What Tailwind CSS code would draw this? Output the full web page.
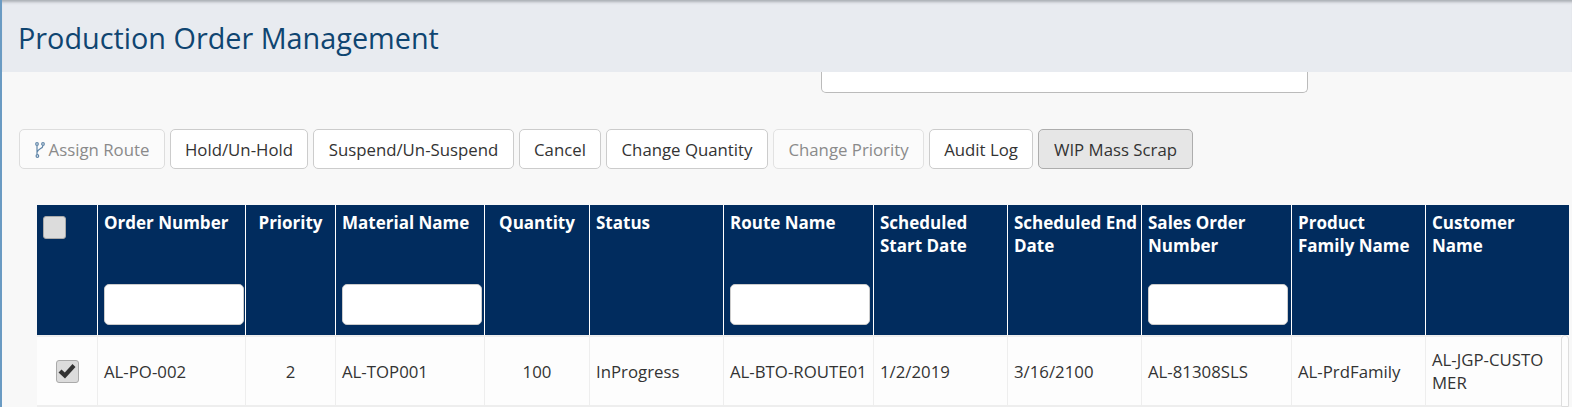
<!DOCTYPE html>
<html lang="en">
<head>
<meta charset="UTF-8">
<title>Production Order Management</title>
<script src="https://cdn.jsdelivr.net/npm/@tailwindcss/browser@4"></script>
</head>
<body class="m-0 h-[407px] w-[1572px] overflow-hidden bg-[#f8f8f8] font-['Open_Sans',sans-serif] text-[16.8px] text-[#333]">
<div class="h-[407px] border-l-[2px] border-[#6a9bc3]">
  <header class="h-[72px] bg-[#e8ebf0] pt-[18px] pl-[16px] shadow-[inset_0_4px_3px_-2px_#a9adb3]">
    <h1 class="text-[28.8px] leading-[40px] text-[#0f4571]">Production Order Management</h1>
  </header>

  <div class="ml-[819px] h-[21px] w-[487px] rounded-b-[5px] border border-t-0 border-[#bbb] bg-white"></div>

  <div class="mt-[36px] ml-[17px] flex h-[40px] gap-[5px]">
    <button class="flex w-[146px] items-center justify-center rounded-[5px] border border-[#ddd] bg-[#fbfbfb] pt-[2px] text-[#8a8a8a]">
      <svg class="mr-[4px] h-[16px] w-[10px]" viewBox="0 0 10 16" fill="none" stroke="#5f85a8" stroke-width="1.2">
        <circle cx="2" cy="2" r="1.3"/>
        <circle cx="8" cy="2" r="1.3"/>
        <circle cx="2.4" cy="14" r="1.3"/>
        <path d="M2 3.4V12.6M8 3.4C8 7 3 6.5 2.2 10"/>
      </svg>
      Assign Route
    </button>
    <button class="w-[138px] rounded-[5px] border border-[#ccc] bg-white pt-[2px] text-[#333]">Hold/Un-Hold</button>
    <button class="w-[201px] rounded-[5px] border border-[#ccc] bg-white pt-[2px] text-[#333]">Suspend/Un-Suspend</button>
    <button class="w-[82px] rounded-[5px] border border-[#ccc] bg-white pt-[2px] text-[#333]">Cancel</button>
    <button class="w-[162px] rounded-[5px] border border-[#ccc] bg-white pt-[2px] text-[#333]">Change Quantity</button>
    <button class="w-[151px] rounded-[5px] border border-[#e2e2e2] bg-[#fbfbfb] pt-[2px] text-[#8a8a8a]">Change Priority</button>
    <button class="w-[104px] rounded-[5px] border border-[#ccc] bg-white pt-[2px] text-[#333]">Audit Log</button>
    <button class="w-[155px] rounded-[5px] border border-[#adadad] bg-[#e6e6e6] pt-[2px] text-[#333]">WIP Mass Scrap</button>
  </div>

  <table class="mt-[36px] ml-[35px] w-[1532px] table-fixed border-separate border-spacing-0">
    <colgroup>
      <col class="w-[61px]"><col class="w-[148px]"><col class="w-[90px]"><col class="w-[149px]">
      <col class="w-[105px]"><col class="w-[134px]"><col class="w-[150px]"><col class="w-[134px]">
      <col class="w-[134px]"><col class="w-[150px]"><col class="w-[134px]"><col class="w-[135px]"><col class="w-[8px]">
    </colgroup>
    <thead class="bg-[#012c5e] text-left align-top text-[17px] leading-[23px] font-bold text-white">
      <tr class="h-[130px]">
        <th class="border-r border-white pt-[11px] pl-[6px]">
          <div class="h-[23px] w-[23px] rounded-[3px] border border-[#aaa] bg-[#dcdcdc]"></div>
        </th>
        <th class="border-r border-white pt-[6px] pl-[6px]">
          <div class="h-[73px]">Order Number</div>
          <input class="block h-[41px] w-[140px] rounded-[5px] border border-[#ccc] bg-white">
        </th>
        <th class="border-r border-white pt-[6px] text-center">Priority</th>
        <th class="border-r border-white pt-[6px] pl-[6px]">
          <div class="h-[73px]">Material Name</div>
          <input class="block h-[41px] w-[140px] rounded-[5px] border border-[#ccc] bg-white">
        </th>
        <th class="border-r border-white pt-[6px] text-center">Quantity</th>
        <th class="border-r border-white pt-[6px] pl-[6px]">Status</th>
        <th class="border-r border-white pt-[6px] pl-[6px]">
          <div class="h-[73px]">Route Name</div>
          <input class="block h-[41px] w-[140px] rounded-[5px] border border-[#ccc] bg-white">
        </th>
        <th class="border-r border-white pt-[6px] pl-[6px]">Scheduled Start Date</th>
        <th class="border-r border-white pt-[6px] pl-[6px]">Scheduled End Date</th>
        <th class="border-r border-white pt-[6px] pl-[6px]">
          <div class="h-[73px]">Sales Order Number</div>
          <input class="block h-[41px] w-[140px] rounded-[5px] border border-[#ccc] bg-white">
        </th>
        <th class="border-r border-white pt-[6px] pl-[6px]">Product Family Name</th>
        <th colspan="2" class="pt-[6px] pr-[30px] pl-[6px]">Customer Name</th>
      </tr>
    </thead>
    <tbody class="bg-[#fdfdfd] text-[16.8px] leading-[23px] text-[#333]">
      <tr class="h-[72px]">
        <td class="border-t-2 border-r border-b-2 border-[#eee]">
          <div class="mx-auto flex h-[23px] w-[23px] items-center justify-center rounded-[3px] border border-[#aaa] bg-[#dcdcdc]">
            <svg class="h-[17px] w-[18px]" viewBox="0 0 18 17" fill="#333"><path d="M14.5 1 17.5 4 7 15.5 0.5 9.5 3.5 6.5 6.8 9.5Z"/></svg>
          </div>
        </td>
        <td class="border-t-2 border-r border-b-2 border-[#eee] pl-[6px]">AL-PO-002</td>
        <td class="border-t-2 border-r border-b-2 border-[#eee] text-center">2</td>
        <td class="border-t-2 border-r border-b-2 border-[#eee] pl-[6px]">AL-TOP001</td>
        <td class="border-t-2 border-r border-b-2 border-[#eee] text-center">100</td>
        <td class="border-t-2 border-r border-b-2 border-[#eee] pl-[6px]">InProgress</td>
        <td class="border-t-2 border-r border-b-2 border-[#eee] pl-[6px]">AL-BTO-ROUTE01</td>
        <td class="border-t-2 border-r border-b-2 border-[#eee] pl-[6px]">1/2/2019</td>
        <td class="border-t-2 border-r border-b-2 border-[#eee] pl-[6px]">3/16/2100</td>
        <td class="border-t-2 border-r border-b-2 border-[#eee] pl-[6px]">AL-81308SLS</td>
        <td class="border-t-2 border-r border-b-2 border-[#eee] pl-[6px]">AL-PrdFamily</td>
        <td class="border-t-2 border-b-2 border-[#eee] pr-[6px] pl-[6px] break-all">AL-JGP-CUSTOMER</td>
        <td class="rounded-t-[4px] border border-[#ddd] bg-[#fdfdfd]"></td>
      </tr>
    </tbody>
  </table>
</div>
</body>
</html>
